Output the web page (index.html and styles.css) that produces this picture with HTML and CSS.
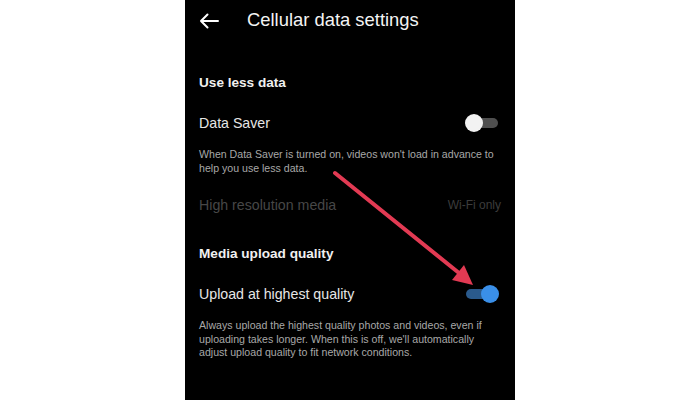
FILE: index.html
```html
<!DOCTYPE html>
<html lang="en">
<head>
    <meta charset="UTF-8">
    <meta name="viewport" content="width=device-width, initial-scale=1.0">
    <title>Cellular data settings</title>
    <link rel="stylesheet" href="styles.css">
</head>
<body>
    <div class="screen">
        <div class="topbar">
            <svg class="back-icon" width="20" height="16" viewBox="0 0 20 16">
                <path d="M19 8H2M8.5 1.5L2 8l6.5 6.5" fill="none" stroke="#fff" stroke-width="2" stroke-linecap="round" stroke-linejoin="round"/>
            </svg>
            <h1 class="page-title">Cellular data settings</h1>
        </div>

        <!-- Use less data -->
        <h2 class="section-title first">Use less data</h2>
        <div class="setting-row">
            <span class="setting-label">Data Saver</span>
            <span class="toggle"><span class="toggle-knob"></span></span>
        </div>
        <p class="setting-desc">When Data Saver is turned on, videos won't load in advance to help you use less data.</p>
        <div class="setting-row disabled">
            <span class="setting-label">High resolution media</span>
            <span class="setting-value">Wi-Fi only</span>
        </div>

        <!-- Media upload quality -->
        <h2 class="section-title">Media upload quality</h2>
        <div class="setting-row">
            <span class="setting-label">Upload at highest quality</span>
            <span class="toggle on"><span class="toggle-knob"></span></span>
        </div>
        <p class="setting-desc last">Always upload the highest quality photos and videos, even if uploading takes longer. When this is off, we'll automatically adjust upload quality to fit network conditions.</p>

        <!-- annotation arrow pointing at the upload toggle -->
        <svg class="pointer" width="330" height="400" viewBox="0 0 330 400">
            <line x1="150" y1="173" x2="274" y2="273" stroke="#e23a53" stroke-width="4" stroke-linecap="round"/>
            <polygon points="288,285 267,280 279,265" fill="#e23a53"/>
        </svg>
    </div>
</body>
</html>
```

FILE: styles.css
```css
body {
    margin: 0;
    background: #ffffff;
    font-family: "Liberation Sans", Arial, sans-serif;
}

.screen {
    position: relative;
    width: 330px;
    height: 400px;
    margin: 0 auto;
    background: #000000;
    padding: 0 15px 0 14px;
    box-sizing: border-box;
    color: #ececec;
}

.topbar {
    height: 40px;
    display: flex;
    align-items: center;
    gap: 28px;
}

.back-icon {
    flex-shrink: 0;
    margin-top: 1px;
}

.page-title {
    margin: 0;
    font-size: 18.4px;
    font-weight: 400;
    color: #f4f4f4;
}

.section-title {
    margin: 28px 0 0;
    height: 20px;
    line-height: 20px;
    font-size: 13.6px;
    font-weight: 700;
    color: #f0f0f0;
}

.section-title.first {
    margin-top: 33px;
}

.setting-row {
    margin-top: 19px;
    height: 22px;
    display: flex;
    align-items: center;
    justify-content: space-between;
    padding-right: 2px;
}

.setting-label {
    font-size: 14.2px;
    color: #e6e6e6;
}

.setting-row.disabled .setting-label {
    color: #474747;
}

.setting-value {
    font-size: 12px;
    color: #3c3c3c;
    margin-right: -3px;
}

.setting-desc {
    margin: 13px 0 0;
    font-size: 10.6px;
    line-height: 14px;
    color: #a8a8a8;
}

.setting-desc.last {
    line-height: 13.5px;
    margin-top: 14px;
    padding-right: 8px;
}

.toggle {
    position: relative;
    width: 32px;
    height: 10px;
    border-radius: 5px;
    background: #4f4f4f;
}

.toggle-knob {
    position: absolute;
    top: -4px;
    left: -1px;
    width: 18px;
    height: 18px;
    border-radius: 50%;
    background: #f2f2f2;
}

.toggle.on {
    background: #2a5a8c;
}

.toggle.on .toggle-knob {
    left: auto;
    right: -1px;
    background: #3a8fe8;
}

.pointer {
    position: absolute;
    top: 0;
    left: 0;
    pointer-events: none;
}
```
